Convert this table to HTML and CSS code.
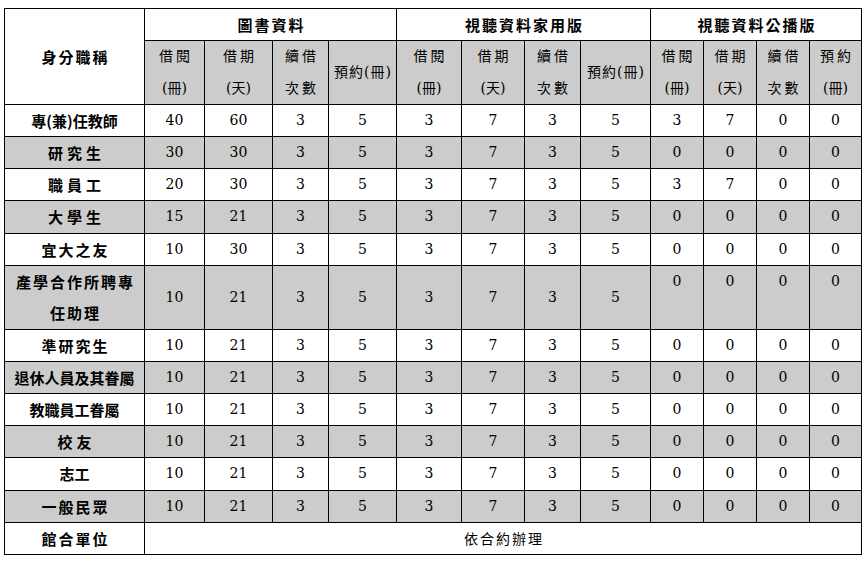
FILE: index.html
```html
<!DOCTYPE html>
<html lang="zh-Hant">
<head>
<meta charset="utf-8">
<title>借閱權限</title>
<link rel="stylesheet" href="styles.css">
</head>
<body>
<table class="loan">
  <colgroup>
    <col class="c-role">
    <col class="c60"><col class="c68"><col class="c56"><col class="c68">
    <col class="c65"><col class="c63"><col class="c56"><col class="c70">
    <col class="c53"><col class="c53"><col class="c53"><col class="c52">
  </colgroup>
  <thead>
    <tr class="h1">
      <th rowspan="2" class="role-head">身分職稱</th>
      <th colspan="4" class="group">圖書資料</th>
      <th colspan="4" class="group">視聽資料家用版</th>
      <th colspan="4" class="group">視聽資料公播版</th>
    </tr>
    <tr class="h2">
      <th><span class="sp">借閱</span><br>(冊)</th><th><span class="sp">借期</span><br>(天)</th><th><span class="sp">續借</span><br><span class="sp">次數</span></th><th class="one">預約(冊)</th>
      <th><span class="sp">借閱</span><br>(冊)</th><th><span class="sp">借期</span><br>(天)</th><th><span class="sp">續借</span><br><span class="sp">次數</span></th><th class="one">預約(冊)</th>
      <th><span class="sp">借閱</span><br>(冊)</th><th><span class="sp">借期</span><br>(天)</th><th><span class="sp">續借</span><br><span class="sp">次數</span></th><th><span class="sp">預約</span><br>(冊)</th>
    </tr>
  </thead>
  <tbody>
    <tr><td class="role tight">專(兼)任教師</td><td>40</td><td>60</td><td>3</td><td>5</td><td>3</td><td>7</td><td>3</td><td>5</td><td>3</td><td>7</td><td>0</td><td>0</td></tr>
    <tr class="alt"><td class="role wide">研究生</td><td>30</td><td>30</td><td>3</td><td>5</td><td>3</td><td>7</td><td>3</td><td>5</td><td>0</td><td>0</td><td>0</td><td>0</td></tr>
    <tr><td class="role wide">職員工</td><td>20</td><td>30</td><td>3</td><td>5</td><td>3</td><td>7</td><td>3</td><td>5</td><td>3</td><td>7</td><td>0</td><td>0</td></tr>
    <tr class="alt"><td class="role wide">大學生</td><td>15</td><td>21</td><td>3</td><td>5</td><td>3</td><td>7</td><td>3</td><td>5</td><td>0</td><td>0</td><td>0</td><td>0</td></tr>
    <tr><td class="role">宜大之友</td><td>10</td><td>30</td><td>3</td><td>5</td><td>3</td><td>7</td><td>3</td><td>5</td><td>0</td><td>0</td><td>0</td><td>0</td></tr>
    <tr class="alt tall"><td class="role">產學合作所聘專<br>任助理</td><td>10</td><td>21</td><td>3</td><td>5</td><td>3</td><td>7</td><td>3</td><td>5</td><td class="top">0</td><td class="top">0</td><td class="top">0</td><td class="top">0</td></tr>
    <tr><td class="role">準研究生</td><td>10</td><td>21</td><td>3</td><td>5</td><td>3</td><td>7</td><td>3</td><td>5</td><td>0</td><td>0</td><td>0</td><td>0</td></tr>
    <tr class="alt"><td class="role tight">退休人員及其眷屬</td><td>10</td><td>21</td><td>3</td><td>5</td><td>3</td><td>7</td><td>3</td><td>5</td><td>0</td><td>0</td><td>0</td><td>0</td></tr>
    <tr><td class="role tight">教職員工眷屬</td><td>10</td><td>21</td><td>3</td><td>5</td><td>3</td><td>7</td><td>3</td><td>5</td><td>0</td><td>0</td><td>0</td><td>0</td></tr>
    <tr class="alt"><td class="role wide">校友</td><td>10</td><td>21</td><td>3</td><td>5</td><td>3</td><td>7</td><td>3</td><td>5</td><td>0</td><td>0</td><td>0</td><td>0</td></tr>
    <tr><td class="role tight">志工</td><td>10</td><td>21</td><td>3</td><td>5</td><td>3</td><td>7</td><td>3</td><td>5</td><td>0</td><td>0</td><td>0</td><td>0</td></tr>
    <tr class="alt"><td class="role">一般民眾</td><td>10</td><td>21</td><td>3</td><td>5</td><td>3</td><td>7</td><td>3</td><td>5</td><td>0</td><td>0</td><td>0</td><td>0</td></tr>
    <tr><td class="role">館合單位</td><td colspan="12" class="note">依合約辦理</td></tr>
  </tbody>
</table>
</body>
</html>
```
FILE: styles.css
```css
html, body {
  margin: 0;
  padding: 0;
  background: #ffffff;
}
body {
  font-family: "DejaVu Serif", "Noto Sans CJK TC", serif;
  color: #000;
}
.loan {
  border-collapse: collapse;
  table-layout: fixed;
  width: 858px;
  margin: 8px 0 0 4px;
  font-size: 14px;
}
.c-role { width: 140px; }
.c60 { width: 60px; }
.c68 { width: 68px; }
.c56 { width: 56px; }
.c65 { width: 65px; }
.c63 { width: 63px; }
.c70 { width: 70px; }
.c53 { width: 53px; }
.c52 { width: 52px; }

.loan th, .loan td {
  border: 1px solid #000;
  padding: 0;
  text-align: center;
  vertical-align: middle;
  line-height: 31.15px;
  white-space: nowrap;
}
.loan th {
  font-weight: normal;
}
.h1 th.group {
  font-family: "Noto Sans CJK TC", sans-serif;
  font-weight: 700;
  font-size: 15px;
  letter-spacing: 2px;
  padding-left: 2px;
  line-height: 31px;
}
.role-head {
  font-family: "Noto Sans CJK TC", sans-serif;
  font-weight: 700 !important;
  font-size: 15px;
  letter-spacing: 2px;
  padding-left: 2px !important;
  background: #fff;
}
.h2 th {
  background: #cccccc;
  line-height: 31.5px;
  font-size: 14px;
}
.h2 .sp {
  letter-spacing: 3px;
  margin-right: -3px;
}
.h2 th.one {
  letter-spacing: 1px;
  padding-left: 1px;
}
.alt td {
  background: #cccccc;
}
.role {
  font-family: "Noto Sans CJK TC", sans-serif;
  font-weight: 700;
  font-size: 15px;
  letter-spacing: 2px;
  padding-left: 2px !important;
}
.role.tight {
  letter-spacing: 0;
  padding-left: 0 !important;
}
.role.wide {
  letter-spacing: 4px;
  padding-left: 4px !important;
}
.tall td {
  line-height: 31.5px;
}
.tall td.top {
  vertical-align: top;
}
.note {
  font-family: "Noto Sans CJK TC", sans-serif;
  font-size: 14px;
  letter-spacing: 2px;
  padding-left: 2px !important;
}
```
